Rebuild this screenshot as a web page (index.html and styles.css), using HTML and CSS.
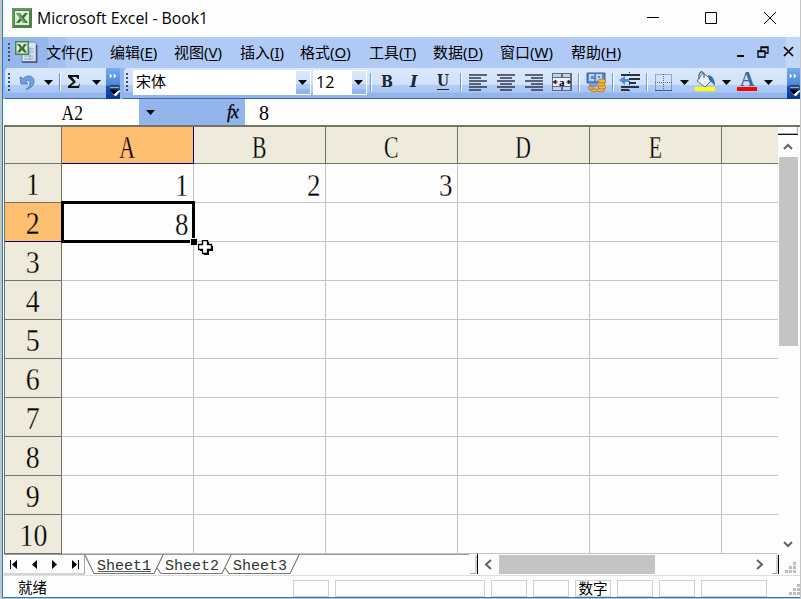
FILE: index.html
```html
<!DOCTYPE html>
<html lang="zh-CN">
<head>
<meta charset="utf-8">
<title>Microsoft Excel - Book1</title>
<link rel="stylesheet" href="styles.css">
</head>
<body>
<div class="window">
  <header class="titlebar">
    <svg class="app-icon" width="20" height="20" viewBox="0 0 20 20"><rect width="20" height="20" fill="#4d8349"/><path d="M1 19V1h18" fill="none" stroke="#86ae7c"/><rect x="3" y="3" width="14" height="14" fill="#e1eddc"/><path d="M4 5h4l2 3 3-3h3l-4 5 4 5h-4l-2-3-3 3H4l4-5z" fill="#347438"/><path d="M4 5h3l7 10h-3z" fill="#6fa467"/></svg>
    <span class="title">Microsoft Excel - Book1</span>
    <svg class="win-controls" width="130" height="14" viewBox="0 0 130 14"><path d="M0 6.500h12M58.500 1.500h11v11h-11zM117 1l12 12M129 1l-12 12" fill="none" stroke="#000"/></svg>
  </header>
  <nav class="menubar">
    <i class="grip"></i>
    <svg class="book-icon" width="23" height="22" viewBox="0 0 23 22"><path d="M11 1h9l2 3v17H7v-6z" fill="#d8e5f6" stroke="#7188ab"/><path d="M21.500 4v17H7" fill="none" stroke="#46566f" stroke-width="1.500"/><path d="M14 8h5M14 11h5M9 15h10M9 18h10M15 6v13" stroke="#89a8cf"/><rect width="14" height="14" fill="#4d8349"/><rect x="1.500" y="1.500" width="11" height="11" fill="#e1eddc"/><path d="M2 3h3l2 3 2-3h3L9 7l3 4.500H9L7 9l-2 2.500H2L5 7z" fill="#347438"/></svg>
    <div class="menus"><span>文件(<u>F</u>)</span><span>编辑(<u>E</u>)</span><span>视图(<u>V</u>)</span><span>插入(<u>I</u>)</span><span>格式(<u>O</u>)</span><span>工具(<u>T</u>)</span><span>数据(<u>D</u>)</span><span>窗口(<u>W</u>)</span><span>帮助(<u>H</u>)</span></div>
    <svg class="doc-controls" width="58" height="12" viewBox="0 0 58 12"><path d="M1 10h7" stroke="#000" stroke-width="2"/><path d="M25 5V1h7v6h-3M22 5h7v6h-7zM22 5.500h7M25 1.500h7" fill="none" stroke="#000" stroke-width="1.300"/><path d="M48 1l9 9M57 1l-9 9" stroke="#000" stroke-width="1.700"/></svg>
  </nav>
  <div class="toolbars">
    <svg width="797" height="31" viewBox="0 0 797 31">
      <defs>
        <linearGradient id="bar" x2="0" y2="1"><stop offset="0" stop-color="#d9e8fc"/><stop offset=".54" stop-color="#cfe1fb"/><stop offset=".56" stop-color="#b0cbf6"/><stop offset=".78" stop-color="#aac7f4"/><stop offset=".8" stop-color="#94b5ec"/></linearGradient>
        <linearGradient id="end" x2="0" y2="1"><stop stop-color="#75acf1"/><stop offset=".55" stop-color="#4d88d8"/><stop offset=".6" stop-color="#1451ae"/><stop offset="1" stop-color="#053995"/></linearGradient>
        <g id="drop"><path d="M0 0h9L4.500 5z"/></g>
        <g id="more"><path d="M4 6v4l2-2zM8 6v4l2-2z" fill="#fff" stroke="#fff" stroke-width=".5"/><path d="M4 19h9M5 23h9l-4.500 5z" stroke="#fff" fill="#fff"/><path d="M4 18h9M4 22h8l-4 4z" stroke="#000"/></g>
      </defs>
      <rect width="797" height="31" fill="#94b5ec"/>
      <path d="M6 0h102v31H6a4 4 0 0 1-4-4V4a4 4 0 0 1 4-4zM125 0h661v28H125a4 4 0 0 1-4-4V4a4 4 0 0 1 4-4z" fill="url(#bar)"/>
      <rect x="103" width="14" height="31" fill="url(#end)"/><rect x="784" width="13" height="31" fill="url(#end)"/>
      <path d="M6 5v18M124 5v18" stroke="#35517d" stroke-width="2" stroke-dasharray="2 2"/>
      <path d="M17 9l1 7 7 0-2.500-2.500c3-2 5-.5 4.500 2.500-.4 2.500-2 4-4 5.500 5.500-1.500 8.500-5 8-9-.6-4.500-6.500-6.500-10.500-2z" fill="#739fde" stroke="#4173b7" stroke-width=".8"/>
      <path d="M65 7h11v4h-1l-2-2h-4l4 5-5 4h7l2-3-1 5H65v-2l5-4-5-5z" fill="#111"/>
      <use href="#drop" x="41" y="12"/><use href="#drop" x="89" y="12"/>
      <path d="M56.500 5v18" stroke="#6593cf"/><path d="M57.500 5v18" stroke="#fff"/>
      <use href="#more" x="103"/><use href="#more" x="783"/>
      <path d="M130 2h163v25H130zM310 2h54v25h-54z" fill="#fff"/><path d="M292.500 2.500h15v24h-15zM348.500 2.500h15v24h-15z" fill="url(#bar)" stroke="#fff"/>
      <use href="#drop" x="295" y="12"/><use href="#drop" x="351" y="12"/>
      <g stroke="#6e96da"><path d="M367.500 5v18M457.500 5v18M575.500 5v18M609.500 5v18M643.500 5v18"/><path d="M368.500 5v18M458.500 5v18M576.500 5v18M610.500 5v18M644.500 5v18" stroke="#fff"/></g>
      <g class="format-letters"><text x="378" y="19" textLength="12" lengthAdjust="spacingAndGlyphs">B</text><text x="407" y="19" font-style="italic">I</text><text x="434" y="18" textLength="12" lengthAdjust="spacingAndGlyphs">U</text></g><path d="M434 21.500h12" stroke="#20272c"/>
      <g stroke="#34374c" stroke-width="1.500"><path d="M466 7h18M466 10h12M466 13h18M466 16h12M466 19h18M466 22h12M494 7h18M497 10h12M494 13h18M497 16h12M494 19h18M497 22h12M522 7h18M528 10h12M522 13h18M528 16h12M522 19h18M528 22h12"/></g>
      <g><rect x="549" y="5" width="20" height="18" fill="#606c84"/><path d="M550 6h8v3h-8zM560 6h7v3h-7zM550 19h8v3h-8zM560 19h7v3h-7z" fill="#c4d3ed"/><path d="M550 10h17v8h-17z" fill="#edf3ff"/><path d="M550 14l3-2v4zM568 14l-3-2v4zM552 14h3M563 14h3" fill="#222" stroke="#222" stroke-width=".7"/><text class="merge" x="556" y="17.500">a</text></g>
      <g><path d="M584 5h18v10h-18z" fill="#6389c8" stroke="#355f9f"/><path d="M591 7h-4v5h4M594 13V7h4v4h-3" fill="none" stroke="#d9eaff" stroke-width="1.400"/><path d="M586 16h8v3h-8z" fill="#7a9cd0"/><g fill="#f0b542" stroke="#a56c24" stroke-width=".7"><ellipse cx="598" cy="22" rx="4" ry="2"/><ellipse cx="599" cy="19" rx="4" ry="2"/><ellipse cx="598" cy="16" rx="4" ry="2"/><ellipse cx="599" cy="13" rx="4" ry="2"/><ellipse cx="588" cy="20" rx="3" ry="1.500"/><ellipse cx="591" cy="22.500" rx="3.500" ry="1.500"/></g></g>
      <path d="M618 7h19M626 11h11M626 15h7M618 19h18M618 22h8" stroke="#293142" stroke-width="2"/><path d="M616 12l6-4v3h4v3h-4v3z" fill="#568bd5"/><path d="M626.500 4v21" stroke="#24344f" stroke-dasharray="1 2"/>
      <path d="M652.500 6.500h16v16h-16zM660.500 6v17M652 14.500h17" fill="none" stroke="#526a91" stroke-dasharray="1 1"/><path d="M652 22.500h17" stroke="#455e84"/>
      <path d="M700 5l9 7-7 7-8-6z" fill="#edf3fb" stroke="#516b94"/><path d="M701 10V6q-3-5-5 1v4" fill="none" stroke="#53698b" stroke-width="1.300"/><path d="M705 7q7 1 7 11c-2-3-4-4-6-6z" fill="#3e6ba9"/><path d="M692 19h20v4h-20z" fill="#ff0"/>
      <text class="color-letter" x="737" y="18">A</text><path d="M734 19h20v4h-20z" fill="#f00"/>
      <use href="#drop" x="677" y="12"/><use href="#drop" x="719" y="12"/><use href="#drop" x="761" y="12"/>
      <text class="font-name" x="133" y="19">宋体</text><text class="font-size" x="313" y="19.500">12</text>
      <path d="M2 30.500h101M120 30.500h664" stroke="#3b62a4"/>
    </svg>
  </div>
  <section class="formula-row"><div class="name-box"><b>A2</b></div><div class="fx"><svg width="9" height="5"><path d="M0 0h9L4.500 5z"/></svg><i>fx</i></div><div class="formula">8</div></section>
  <main class="workspace">
    <div class="sheet">
      <div class="corner"></div><div class="col selected"><b>A</b></div><div class="col"><b>B</b></div><div class="col"><b>C</b></div><div class="col"><b>D</b></div><div class="col"><b>E</b></div><div class="col last"></div>
      <div class="row"><b>1</b></div><div class="cell"><b>1</b></div><div class="cell"><b>2</b></div><div class="cell"><b>3</b></div><div class="cell"></div><div class="cell"></div><div class="cell last"></div>
      <div class="row selected"><b>2</b></div><div class="cell active"><b>8</b><i class="handle"></i><svg class="cursor" width="16" height="16" viewBox="0 0 16 16"><path d="M5 1h5v4h4v5h-4v4H5v-4H1V5h4z" transform="translate(1 1)"/><path d="M4.500.500h5v4h4v5h-4v4h-5v-4h-4v-5h4z" fill="#fff" stroke="#000" stroke-width="1.300"/></svg></div><div class="cell"></div><div class="cell"></div><div class="cell"></div><div class="cell"></div><div class="cell last"></div>
      <div class="row"><b>3</b></div><div class="cell"></div><div class="cell"></div><div class="cell"></div><div class="cell"></div><div class="cell"></div><div class="cell last"></div>
      <div class="row"><b>4</b></div><div class="cell"></div><div class="cell"></div><div class="cell"></div><div class="cell"></div><div class="cell"></div><div class="cell last"></div>
      <div class="row"><b>5</b></div><div class="cell"></div><div class="cell"></div><div class="cell"></div><div class="cell"></div><div class="cell"></div><div class="cell last"></div>
      <div class="row"><b>6</b></div><div class="cell"></div><div class="cell"></div><div class="cell"></div><div class="cell"></div><div class="cell"></div><div class="cell last"></div>
      <div class="row"><b>7</b></div><div class="cell"></div><div class="cell"></div><div class="cell"></div><div class="cell"></div><div class="cell"></div><div class="cell last"></div>
      <div class="row"><b>8</b></div><div class="cell"></div><div class="cell"></div><div class="cell"></div><div class="cell"></div><div class="cell"></div><div class="cell last"></div>
      <div class="row"><b>9</b></div><div class="cell"></div><div class="cell"></div><div class="cell"></div><div class="cell"></div><div class="cell"></div><div class="cell last"></div>
      <div class="row"><b>10</b></div><div class="cell"></div><div class="cell"></div><div class="cell"></div><div class="cell"></div><div class="cell"></div><div class="cell last"></div>
    </div>
    <aside class="vscroll"><div class="split"></div><svg width="10" height="7"><path d="M1 6l4-4 4 4"/></svg><div class="thumb"></div><svg class="down" width="10" height="7"><path d="M1 1l4 4 4-4"/></svg></aside>
  </main>
  <div class="tabs">
    <svg width="797" height="21" viewBox="0 0 797 21">
      <path d="M0 .500h465" stroke="#999"/><path d="M80.500 1v19H0" fill="none" stroke="#aaa"/>
      <path d="M6.500 6v9M74.500 6v9" stroke="#000"/><path d="M13 6v9l-5-4.500zM33 6v9l-5-4.500zM48 6v9l5-4.500zM68 6v9l5-4.500z"/>
      <path d="M81 1l9 18.500h60l9-18.500M153 14l4 5.500h61l9-18.500M221 14l4 5.500h61l9-18.500" fill="none" stroke="#777" stroke-width="1.100"/>
      <g class="sheet-names"><text x="93" y="16">Sheet1</text><text x="161" y="16">Sheet2</text><text x="229" y="16">Sheet3</text></g><path d="M94 17.500h53" stroke="#466a46"/>
      <path d="M466 19.500h6V1" fill="none" stroke="#aaa"/><path d="M473.500 0v20M774.500 1v19" stroke="#000"/><path d="M768 19.500h5V1" fill="none" stroke="#aaa"/>
      <rect x="495" y="1" width="156" height="19" fill="#c4c4c4"/><path d="M487 6l-5 4.500 5 4.500M753 6l5 4.500-5 4.500" fill="none" stroke="#646458" stroke-width="2"/>
      <path d="M789 8h3v3h-3zM785 12h3v3h-3zM789 12h3v3h-3zM781 16h3v3h-3zM785 16h3v3h-3zM789 16h3v3h-3z" fill="#bcbcbc"/>
    </svg>
  </div>
  <footer class="status"><span class="ready">就绪</span><i class="w36"></i><i class="w150"></i><i class="w36"></i><i class="w36"></i><i class="w36">数字</i><i class="w36"></i><i class="w36"></i><i class="w66"></i><svg width="12" height="12"><path d="M9 0h3v3H9zM5 4h3v3H5zM9 4h3v3H9zM1 8h3v3H1zM5 8h3v3H5zM9 8h3v3H9z" fill="#bcbcbc"/></svg></footer>
</div>
</body>
</html>
```

FILE: styles.css
```css
*{box-sizing:border-box}
body{margin:0;width:801px;height:599px;overflow:hidden;background:#c5c5c5;font-family:"Noto Sans","Noto Sans CJK SC",sans-serif}
.window{width:798px;height:598px;margin-left:2px;border-left:1px solid #1881cb;border-bottom:1px solid #1881cb;background:#fdfdfd}
.titlebar{height:37px;display:flex;align-items:center;padding:0 23px 1px 9px}
.title{font-family:"Open Sans","Noto Sans",sans-serif;font-size:15.800px;margin-left:5px;flex:1;letter-spacing:0}
.menubar{height:31px;display:flex;align-items:center;padding:0 6px 2px 5px;background:linear-gradient(90deg,#96b7ed 0 45px,#a3c1f3 46px 62px,#b0caf6 63px 782px,#c1d7f8 783px)}
.grip{width:2px;height:18px;background:repeating-linear-gradient(#35517d 0 2px,transparent 2px 4px)}
.book-icon{margin:0 0 0 5px}
.menus{display:grid;grid-template-columns:64px 64px 66px 60px 69px 64px 67px 71px 60px;margin-left:8px;font-size:15px;white-space:nowrap}
.menus u{text-underline-offset:2px}
.doc-controls{margin-left:auto}
svg{display:block;flex:none}
.format-letters{font:bold 16px "DejaVu Serif",serif;fill:#20272c}
.merge{font:bold 11px "Liberation Serif",serif}
.color-letter{font:bold 20px "Liberation Serif",serif;fill:#41669c}
.font-name{font-size:15px}
.font-size{font:16px "Open Sans",sans-serif}
.formula-row{height:26px;display:flex;margin-left:2px;font-family:"Liberation Serif",serif}
.name-box{width:134px;height:25px;text-align:center;font-size:20px;line-height:29px}
.name-box b,.row b,.col b,.cell b{font-weight:400;display:inline-block;transform:scaleX(.87)}
.fx{width:106px;background:#94b5ec;display:flex;align-items:center;padding:0 7px 0 7px;justify-content:space-between}
.fx i{font-size:18px;letter-spacing:-1px;-webkit-text-stroke:.3px #000}
.formula{font-size:20px;padding:3px 14px}
.workspace{height:429px;margin-left:1px;border-top:2px solid #737365;border-left:1px solid #737365;display:flex}
.sheet{width:773px;display:grid;grid-template:37px repeat(10,39px)/57px repeat(5,132px) 56px;font-family:"Liberation Serif",serif}
.corner,.row,.col{background:#eeebdd;border-right:1px solid #737365;border-bottom:1px solid #737365}
.row,.col{text-align:center;font-size:31px;line-height:41px}
.col{line-height:42px}
.col b{transform:scaleX(.7);-webkit-text-stroke:.3px #eeebdd}
.row b{transform:scaleX(.9);-webkit-text-stroke:.3px #eeebdd}
.cell{border-right:1px solid #c3c3c3;border-bottom:1px solid #c3c3c3;text-align:right;font-size:31px;line-height:43px;padding-right:4px;position:relative}
.cell b{-webkit-text-stroke:.3px #fdfdfd}
.last{border-right:0}
.selected{background:#ffbf70;border-color:#000080}
.selected b{-webkit-text-stroke-color:#ffbf70}
.active::before{content:"";position:absolute;inset:-2px -2px -2px -1px;border:3px solid #000}
.handle{position:absolute;right:-4px;bottom:-4px;width:7px;height:7px;background:#000;border:solid #fff;border-width:1px 0 0 1px;z-index:2}
.cursor{position:absolute;left:136px;top:37px;z-index:2}
.vscroll{width:20px;display:flex;flex-direction:column;align-items:center}
.vscroll svg{margin:8px 0 7px;stroke:#65655a;fill:none;stroke-width:2}
.split{width:20px;height:8px;border-bottom:1px solid #111;box-shadow:inset -1px -1px #aaa}
.thumb{width:19px;height:189px;background:#c4c4c4}
.vscroll .down{margin-top:auto;margin-bottom:6px}
.tabs{height:21px;margin-left:1px}
.sheet-names{font:15px "Liberation Mono",monospace;fill:#333}
.status{height:22px;display:flex;align-items:flex-start;gap:6px;border-top:1px solid #ddd;padding:4px 0 0 15px}
.status i{height:17px;border:1px solid #d0d0d0;font:14.500px/14px "Noto Sans CJK SC",sans-serif;text-align:center;white-space:nowrap}
.ready{width:269px;font-size:14.500px;line-height:15px}
.w36{width:36px}
.w150{width:150px}
.w66{width:66px}
.status svg{margin:4px 0 0 auto}
```
